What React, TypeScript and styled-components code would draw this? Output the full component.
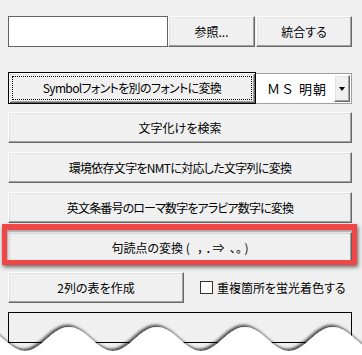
import React from "react";
import styled, { createGlobalStyle, css } from "styled-components";

const GlobalStyle = createGlobalStyle`
  html, body { margin: 0; padding: 0; background: #f0f0f0; }
  body {
    font-family: "Noto Sans CJK JP", "Noto Sans", sans-serif;
    font-size: 12px;
    color: #000;
  }
  * { box-sizing: border-box; }
`;

const Page = styled.div`
  position: relative;
  width: 362px;
  height: 355px;
  overflow: hidden;
  padding: 16px 10px 0 8px;
  display: flex;
  flex-direction: column;
`;

const uiText = css`
  font-family: "Noto Sans CJK JP", "Noto Sans", sans-serif;
  font-size: 12px;
  font-feature-settings: "palt";
  color: #000;
  line-height: 1;
`;

const bevel = css`
  background: #f0f0f0;
  border: 1px solid;
  border-color: #ffffff #696969 #696969 #ffffff;
  box-shadow: inset -1px -1px 0 #a0a0a0, inset 1px 1px 0 #e3e3e3;
`;

const Row = styled.div<{ $mt?: number }>`
  display: flex;
  align-items: flex-start;
  margin-top: ${(p) => p.$mt ?? 0}px;
`;

const TextBox = styled.div`
  width: 160px;
  height: 31px;
  background: #fff;
  border: 1px solid #646464;
`;

const Button = styled.button<{ $w?: number; $ml?: number; $ls?: number }>`
  ${uiText};
  ${bevel};
  letter-spacing: ${(p) => p.$ls ?? 0}px;
  white-space: pre;
  width: ${(p) => (p.$w ? `${p.$w}px` : "100%")};
  height: 31px;
  margin: 0 0 0 ${(p) => p.$ml ?? 0}px;
  padding: 0;
  display: flex;
  align-items: center;
  justify-content: center;
  flex: none;
`;

const DefaultButton = styled.button<{ $ls?: number }>`
  ${uiText};
  letter-spacing: ${(p) => p.$ls ?? 0}px;
  width: 248px;
  height: 32px;
  margin: 0;
  padding: 0;
  background: #f0f0f0;
  border: 1px solid #000;
  box-shadow: inset 1px 1px 0 #ffffff, inset -1px -1px 0 #696969,
    inset 2px 2px 0 #e3e3e3, inset -2px -2px 0 #a0a0a0;
  outline: 1px dotted #000;
  outline-offset: -5px;
  display: flex;
  align-items: center;
  justify-content: center;
  flex: none;
`;

const Combo = styled.div`
  ${uiText};
  width: 96px;
  height: 31px;
  margin-top: 1px;
  background: #fff;
  border: 1px solid #a0a0a0;
  border-left: none;
  display: flex;
  align-items: stretch;
  flex: none;
`;

const ComboValue = styled.span`
  flex: 1;
  display: flex;
  align-items: center;
  padding-left: 11px;
  font-size: 13px;
  font-feature-settings: normal;
  letter-spacing: 1px;
`;

const ComboArrow = styled.span`
  ${bevel};
  width: 16px;
  margin: 1px 1px 1px 0;
  display: flex;
  align-items: center;
  justify-content: center;
  &::after {
    content: "";
    width: 0;
    height: 0;
    border-left: 3.5px solid transparent;
    border-right: 3.5px solid transparent;
    border-top: 4px solid #000;
  }
`;

const Stack = styled.div`
  display: flex;
  flex-direction: column;
  gap: 9px;
  margin-top: 8px;
`;

const CheckLabel = styled.label`
  ${uiText};
  display: flex;
  align-items: center;
  gap: 4px;
  height: 31px;
  margin-left: 16px;
`;

const CheckBox = styled.span`
  width: 13px;
  height: 13px;
  background: #fff;
  border: 1px solid #333;
  flex: none;
`;

const OutputBox = styled.div`
  height: 31px;
  margin-top: 9px;
  border: 1px solid #000;
  background: #f0f0f0;
`;

const RedFrame = styled.div`
  position: absolute;
  left: 2px;
  top: 224px;
  width: 355px;
  height: 41px;
  border: 5px solid #f04646;
  border-top-width: 6px;
  box-shadow: 1px 2px 4px rgba(0, 0, 0, 0.6),
    inset 1px 2px 3px rgba(0, 0, 0, 0.35);
  pointer-events: none;
`;

const Torn = styled.svg`
  position: absolute;
  left: 0;
  bottom: 0;
  width: 362px;
  height: 40px;
  pointer-events: none;
`;

function wavePath(): string {
  // local coords: svg top = page y 315
  const top = 327 - 315;
  const bottom = 351 - 315;
  let d = `M -63 ${bottom}`;
  let x = -63;
  for (let i = 0; i < 6; i++) {
    d += ` C ${x + 16} ${bottom} ${x + 27} ${top} ${x + 44} ${top}`;
    x += 44;
    d += ` C ${x + 17} ${top} ${x + 28} ${bottom} ${x + 44} ${bottom}`;
    x += 44;
  }
  d += ` L ${x} 60 L -63 60 Z`;
  return d;
}

const NB = "\u00A0";

export default function App() {
  return (
    <>
      <GlobalStyle />
      <Page>
        <Row>
          <TextBox />
          <Button $w={87}>参照...</Button>
          <Button $w={96} $ml={1}>
            統合する
          </Button>
        </Row>
        <Row $mt={25}>
          <DefaultButton $ls={-0.65}>Symbolフォントを別のフォントに変換</DefaultButton>
          <Combo>
            <ComboValue>ＭＳ 明朝</ComboValue>
            <ComboArrow />
          </Combo>
        </Row>
        <Stack>
          <Button>文字化けを検索</Button>
          <Button $ls={-0.7}>環境依存文字をNMTに対応した文字列に変換</Button>
          <Button $ls={-0.85}>英文条番号のローマ数字をアラビア数字に変換</Button>
          <Button>{`句読点の変換${NB}(${NB}${NB}${NB}，${NB}．⇒${NB}${NB}、。${NB})`}</Button>
          <Row>
            <Button $w={176}>2列の表を作成</Button>
            <CheckLabel>
              <CheckBox />
              重複箇所を蛍光着色する
            </CheckLabel>
          </Row>
        </Stack>
        <OutputBox />
        <RedFrame />
        <Torn viewBox="0 0 362 40">
          <defs>
            <filter id="tornShadow" x="-10%" y="-50%" width="120%" height="200%">
              <feDropShadow dx="-1.5" dy="-2" stdDeviation="1.6" floodColor="#000" floodOpacity="0.75" />
            </filter>
          </defs>
          <path d={wavePath()} fill="#ffffff" filter="url(#tornShadow)" />
        </Torn>
      </Page>
    </>
  );
}
